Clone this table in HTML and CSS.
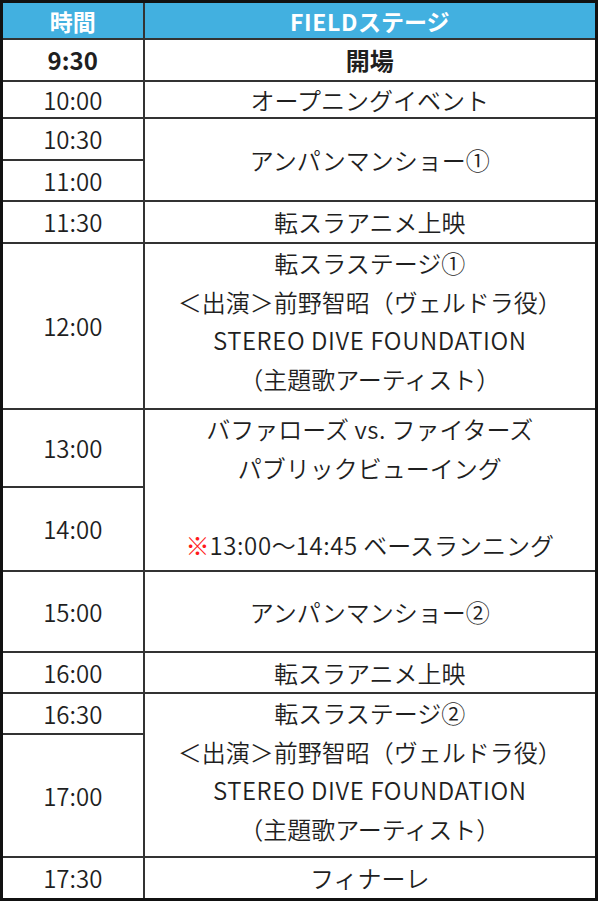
FILE: index.html
```html
<!DOCTYPE html>
<html lang="ja">
<head>
<meta charset="utf-8">
<link rel="stylesheet" href="styles.css">
</head>
<body>
<table class="schedule">
  <colgroup><col class="c-time"><col class="c-stage"></colgroup>
  <thead>
    <tr class="r-head"><th>時間</th><th><span class="latin">FIELD</span>ステージ</th></tr>
  </thead>
  <tbody>
    <tr class="r930"><td class="bold">9:30</td><td class="bold">開場</td></tr>
    <tr class="r1000"><td>10:00</td><td>オープニングイベント</td></tr>
    <tr class="r1030"><td>10:30</td><td rowspan="2">アンパンマンショー①</td></tr>
    <tr class="r1100"><td>11:00</td></tr>
    <tr class="r1130"><td>11:30</td><td>転スラアニメ上映</td></tr>
    <tr class="r1200"><td>12:00</td><td class="multi">転スラステージ①<br>＜出演＞前野智昭（ヴェルドラ役）<br><span class="latin">STEREO DIVE FOUNDATION</span><br>（主題歌アーティスト）</td></tr>
    <tr class="r1300"><td>13:00</td><td rowspan="2" class="multi">バファローズ <span class="latin">vs.</span> ファイターズ<br>パブリックビューイング<br>&nbsp;<br><span class="red">※</span><span class="latin">13:00</span>～<span class="latin">14:45</span> ベースランニング</td></tr>
    <tr class="r1400"><td>14:00</td></tr>
    <tr class="r1500"><td>15:00</td><td>アンパンマンショー②</td></tr>
    <tr class="r1600"><td>16:00</td><td>転スラアニメ上映</td></tr>
    <tr class="r1630"><td>16:30</td><td rowspan="2" class="multi">転スラステージ②<br>＜出演＞前野智昭（ヴェルドラ役）<br><span class="latin">STEREO DIVE FOUNDATION</span><br>（主題歌アーティスト）</td></tr>
    <tr class="r1700"><td>17:00</td></tr>
    <tr class="r1730"><td>17:30</td><td>フィナーレ</td></tr>
  </tbody>
</table>
</body>
</html>
```
FILE: styles.css
```css
html, body {
  margin: 0;
  padding: 0;
  background: #ffffff;
}
body {
  font-family: "Noto Sans CJK JP", "Noto Sans", sans-serif;
  color: #1f1f1f;
}
.schedule {
  width: 598px;
  border-collapse: collapse;
  table-layout: fixed;
  border: 3px solid #111;
  font-size: 24px;
  font-weight: 350;
}
.c-time { width: 142px; }
.schedule th,
.schedule td {
  border: 2px solid #333;
  padding: 0;
  text-align: center;
  vertical-align: middle;
  line-height: 30px;
}
.schedule th {
  background: #42b0e0;
  color: #ffffff;
  font-weight: 700;
  font-size: 23px;
}
.schedule td.bold { font-weight: 700; }
.schedule td.multi {
  line-height: 38.5px;
  vertical-align: top;
  height: auto;
}
.latin { letter-spacing: 0.6px; }
.red { color: #ff1a1a; }
.r-head th { height: 35px; }
.r930 td { height: 40px; }
.r1000 td { height: 35px; }
.r1030 td { height: 40px; }
.r1100 td { height: 39px; }
.r1130 td { height: 40px; }
.r1200 td { height: 164px; }
.r1300 td { height: 76px; }
.r1400 td { height: 82px; }
.r1500 td { height: 79px; }
.r1600 td { height: 39px; }
.r1630 td { height: 39px; }
.r1700 td { height: 121px; }
.r1730 td { height: 40px; }
```
